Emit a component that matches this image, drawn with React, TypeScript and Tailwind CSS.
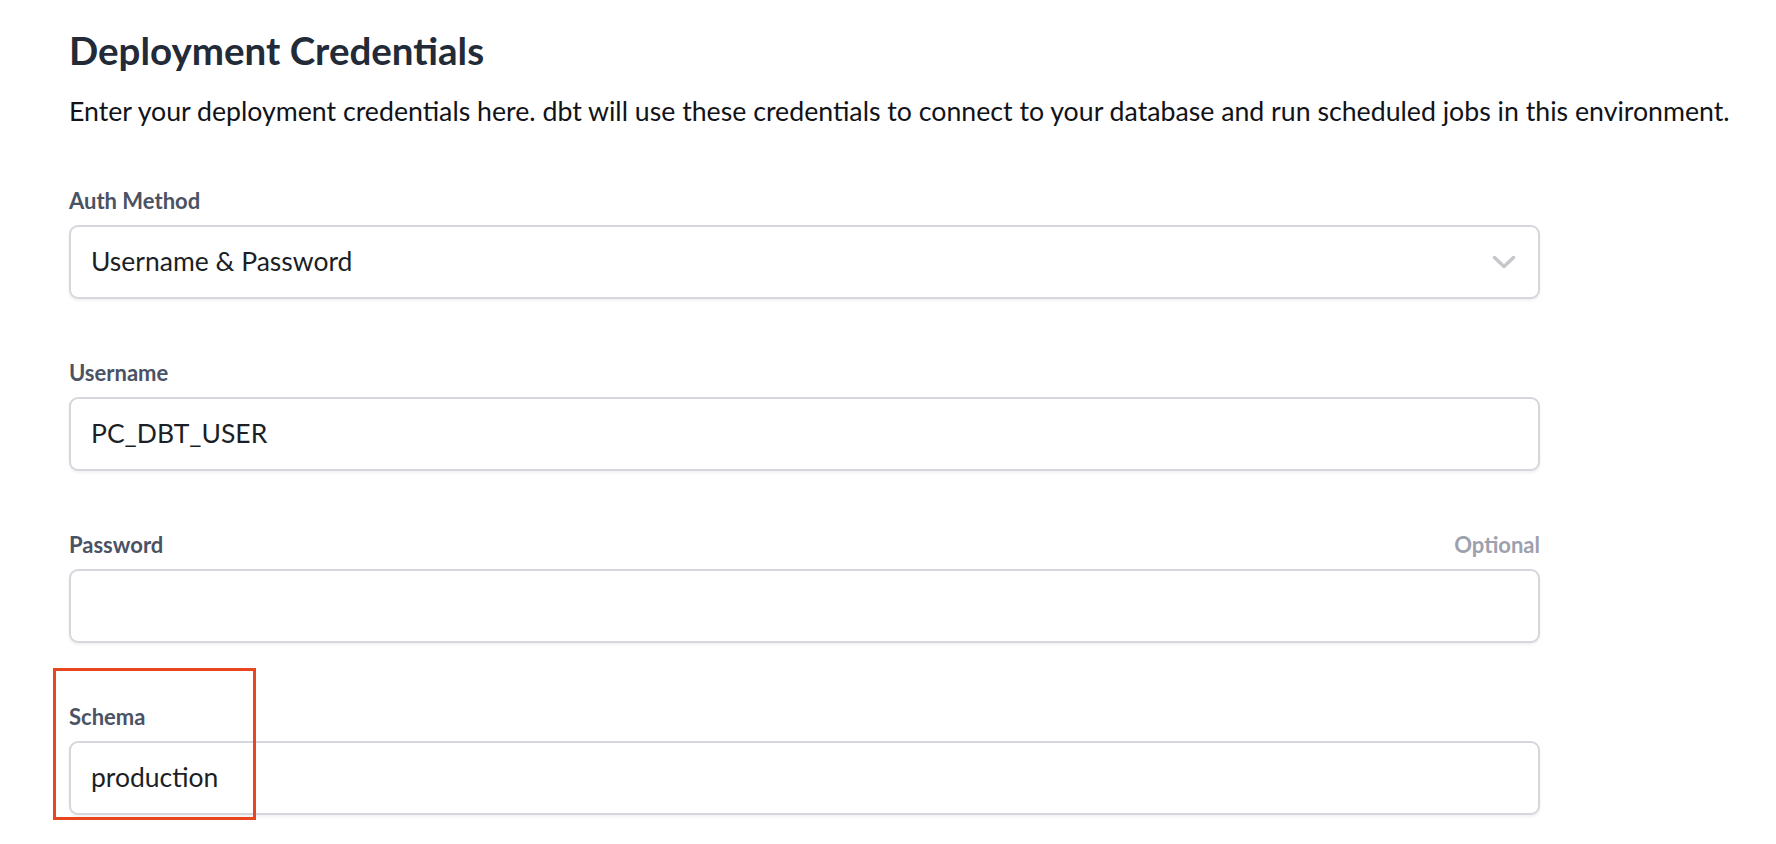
import React from "react";

const Chevron = () => (
    <svg width="24" height="14" viewBox="0 0 24 14" fill="none" className="text-[#c6c7cb]">
        <path d="M2.5 2.5l9.5 9 9.5-9" stroke="currentColor" strokeWidth="3.5" strokeLinecap="round" strokeLinejoin="round" />
    </svg>
);

const Field = ({ label, value, optional, select }: { label: string; value?: string; optional?: boolean; select?: boolean }) => {
    return (
        <div className="flex flex-col">
            <div className="flex justify-between items-center h-6 mb-[13px]">
                <span className="text-[22px] font-bold text-[#4a5263]">{label}</span>
                {optional && <span className="text-[22px] font-bold text-[#9ca1ad]">Optional</span>}
            </div>
            <div className="h-[74px] flex items-center justify-between border-2 border-[#d5d7dd] rounded-[9px] bg-white shadow-[0_2px_3px_rgba(0,0,0,0.06)] pl-[20px] pr-[22px]">
                <span className="text-[26.5px] text-[#1c1f26]">{value}</span>
                {select && <Chevron />}
            </div>
        </div>
    );
};

const App = () => {
    return (
        <div className="min-h-[844px] bg-white pl-[69px] pt-[28px] font-['Lato',sans-serif]">
            {/* Header */}
            <h1 className="text-[38.5px] leading-[44px] font-bold text-[#232a38]">Deployment Credentials</h1>
            <p className="mt-[23px] text-[26.7px] leading-[32px] text-[#111318]">
                Enter your deployment credentials here. dbt will use these credentials to connect to your database and run scheduled jobs in this environment.
            </p>

            {/* Form */}
            <div className="w-[1471px] mt-[61px] flex flex-col gap-[61px]">
                <Field label="Auth Method" value="Username &amp; Password" select />
                <Field label="Username" value="PC_DBT_USER" />
                <Field label="Password" optional />
                <div className="relative">
                    <Field label="Schema" value="production" />
                    {/* highlight box */}
                    <div className="absolute left-[-16px] top-[-36px] w-[203px] h-[152px] border-[3px] border-[#e8461e]" />
                </div>
            </div>
        </div>
    );
};

export default App;
